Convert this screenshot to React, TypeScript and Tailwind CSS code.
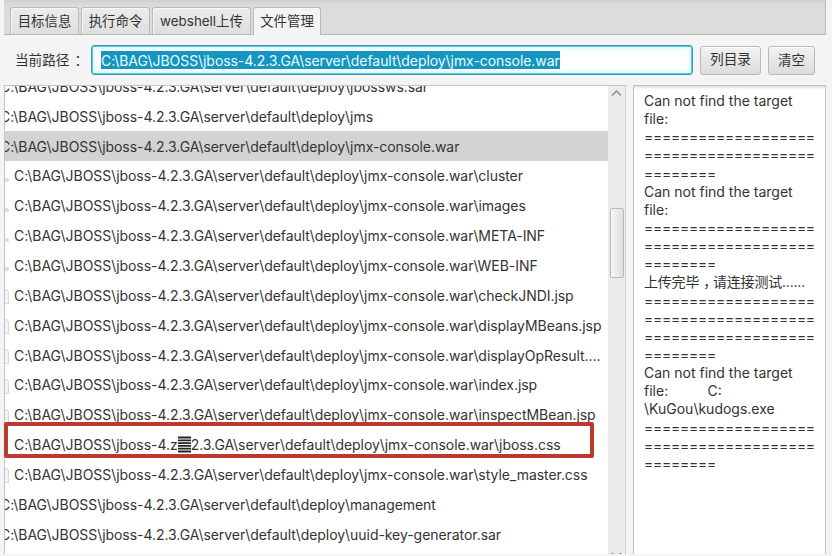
import React from "react";

const BASE = "C:\\BAG\\JBOSS\\jboss-4.2.3.GA\\server\\default\\deploy\\";
const WAR = BASE + "jmx-console.war";

type Kind = "root" | "folder" | "file" | "marked";
const rows: { text: string; kind: Kind; selected?: boolean }[] = [
  { text: BASE + "jbossws.sar", kind: "root" },
  { text: BASE + "jms", kind: "root" },
  { text: WAR, kind: "root", selected: true },
  { text: WAR + "\\cluster", kind: "folder" },
  { text: WAR + "\\images", kind: "folder" },
  { text: WAR + "\\META-INF", kind: "folder" },
  { text: WAR + "\\WEB-INF", kind: "folder" },
  { text: WAR + "\\checkJNDI.jsp", kind: "file" },
  { text: WAR + "\\displayMBeans.jsp", kind: "file" },
  { text: WAR + "\\displayOpResult....", kind: "file" },
  { text: WAR + "\\index.jsp", kind: "file" },
  { text: WAR + "\\inspectMBean.jsp", kind: "file" },
  { text: "2.3.GA\\server\\default\\deploy\\jmx-console.war\\jboss.css", kind: "marked" },
  { text: WAR + "\\style_master.css", kind: "file" },
  { text: BASE + "management", kind: "root" },
  { text: BASE + "uuid-key-generator.sar", kind: "root" },
];

const line = "===================";
const tail = "========";
const log: React.ReactNode[] = [
  "Can not find the target", "file:", line, line, tail,
  "Can not find the target", "file:", line, line, tail,
  <span className="tracking-[-0.2px]">上传完毕<span className="ml-[4px] mr-[-4px]">，</span>请连接测试......</span>,
  line, line, line, tail,
  "Can not find the target", "file:          C:", "\\KuGou\\kudogs.exe",
  line, line, tail,
];

function Row({ text, kind, selected }: { text: string; kind: Kind; selected?: boolean }) {
  return (
    <div className={`flex h-[29.85px] shrink-0 items-center overflow-hidden whitespace-pre tracking-[-0.05px] ${selected ? "bg-[#d3d3d3]" : ""}`}>
      {kind === "root" ? (
        <span className="-ml-[5px]">{text}</span>
      ) : (
        <>
          <span className="flex w-[9px] shrink-0">
            {kind === "folder" && <i className="mt-2 h-1 w-1 rounded-r-full bg-[#dedede]" />}
            {kind === "file" && <i className="mt-[3px] h-[15px] w-1 rounded-tr-[4px] border border-l-0 border-[#dadada] bg-[#f3f3f3]" />}
          </span>
          {kind === "marked" ? (
            <>
              <span>{"C:\\BAG\\JBOSS\\jboss-4.z"}</span>
              <svg className="h-[17px] w-[13px] shrink-0" viewBox="0 0 13 17" stroke="#252525" strokeWidth="1.8">
                <path d="M0 1.5H13M0 4.3H13M0 7.1H13M0 9.9H13M0 12.7H13M0 15.5H13" />
              </svg>
              <span>{text}</span>
            </>
          ) : (
            <span>{text}</span>
          )}
        </>
      )}
    </div>
  );
}

export default function App() {
  const tab = "flex items-center justify-center rounded-t-[3px] border border-b-0 border-[#b9b9b9] shadow-[inset_1px_1px_0_#f8f8f8]";
  const button = "flex h-[29px] items-center justify-center rounded-[3px] border border-[#b9b9b9] bg-linear-to-b from-[#f2f2f2] to-[#dcdcdc] shadow-[inset_0_1px_0_#fff]";
  return (
    <div className="flex h-[556px] w-[832px] flex-col overflow-hidden bg-[#f4f4f4] pl-1 pr-[6px] font-['Inter','Noto_Sans_CJK_SC',sans-serif] text-[14px] text-[#333]">
      <div className="flex h-[35px] w-[822px] shrink-0 items-end gap-[2px] border-b border-r border-[#b9b9b9] bg-linear-to-b from-[#cfcfcf] via-[#dcdcdc] via-15% to-[#dcdcdc] pl-[6px]">
        <div className={`${tab} h-[27px] w-[69px] bg-linear-to-b from-[#ececec] to-[#dedede] text-[13.4px]`}>目标信息</div>
        <div className={`${tab} h-[27px] w-[69px] bg-linear-to-b from-[#ececec] to-[#dedede] text-[13.4px]`}>执行命令</div>
        <div className={`${tab} h-[27px] w-[99px] bg-linear-to-b from-[#ececec] to-[#dedede] text-[13.4px]`}>webshell上传</div>
        <div className={`${tab} -mb-px h-[28px] w-[68px] bg-[#f4f4f4] text-[13.4px]`}>文件管理</div>
      </div>

      <div className="flex h-[50px] shrink-0 items-center pl-[11px]">
        <span className="w-[76px] shrink-0 whitespace-nowrap text-[13.6px]">当前路径<span className="ml-[5px]">：</span></span>
        <div className="flex h-[30px] w-[602px] shrink-0 items-center rounded-[3px] border border-[#389ab5] bg-white px-[9px] shadow-[inset_0_0_0_1px_#67bfd8,inset_0_0_3px_3px_#d5faff]">
          <span className="flex h-[18px] items-center whitespace-pre bg-[#1595bf] tracking-[-0.06px] text-[#e9fbff]">{WAR}</span>
        </div>
        <div className={`${button} ml-[7px] w-[61px] pb-px text-[13.7px]`}>列目录</div>
        <div className={`${button} ml-[7px] w-[47px] text-[13.5px]`}>清空</div>
      </div>

      <div className="flex h-[469px] shrink-0">
        <div className="flex w-[623px] shrink-0 border-l border-t border-[#c4c4c4]">
          <div className="flex w-[603px] shrink-0 flex-col overflow-hidden bg-white">
            <div className="-mt-[14.5px] flex flex-col">
              {rows.map((r) => <Row key={r.text} {...r} />)}
            </div>
          </div>
          <div className="flex w-[18px] shrink-0 flex-col items-center overflow-hidden border-r border-[#d3d3d3] bg-[#ebebeb]">
            <svg className="mt-[2px] h-[10px] w-[11px] shrink-0" viewBox="0 0 11 10" fill="none" stroke="#8b8b8b" strokeWidth="1.5"><path d="M1 7.5 5.5 3 10 7.5" /></svg>
            <div className="mt-[110px] h-[70px] w-[14px] shrink-0 rounded-[2px] border border-[#b9b9b9] bg-linear-to-r from-[#f7f7f7] to-[#dedede]" />
            <svg className="mt-[274px] h-[6px] w-[11px] shrink-0" viewBox="0 0 11 6" fill="none" stroke="#8b8b8b" strokeWidth="1.5"><path d="M1 1 5.5 5.5 10 1" /></svg>
          </div>
        </div>
        <div className="ml-[6px] flex w-[193px] shrink-0 flex-col overflow-hidden border-x border-t border-[#c4c4c4] bg-white pl-[10px] pt-[6px] shadow-[inset_0_3px_3px_-2px_#ccc]">
          {log.map((t, i) => (
            <div key={i} className={`h-[18.15px] shrink-0 whitespace-pre leading-[18.15px] ${t === line || t === tail ? "tracking-[-0.27px]" : ""}`}>{t}</div>
          ))}
        </div>
      </div>
      <div className="pointer-events-none absolute left-[4px] top-[422px] h-[36px] w-[590px] rounded-[2px] border-4 border-[#bb3a2e]" />
    </div>
  );
}
